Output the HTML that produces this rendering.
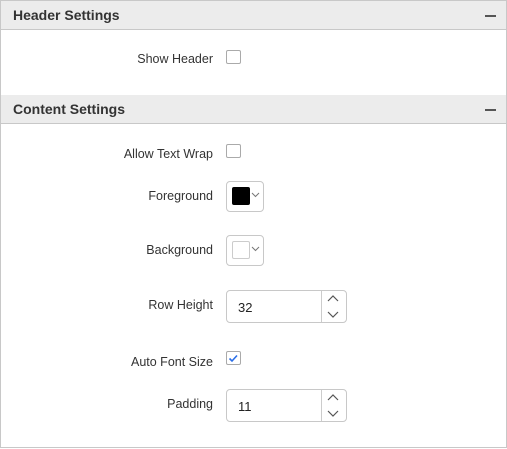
<!DOCTYPE html>
<html><head><style>
*{box-sizing:border-box;margin:0;padding:0}
body{width:507px;height:449px;background:#fff;font-family:"Liberation Sans",sans-serif;position:relative;overflow:hidden}
.frame{position:absolute;left:0;top:0;width:507px;height:448px;border:1px solid #c8c8c8}
.hdr{position:absolute;left:1px;width:505px;height:29px;background:#ececec;border-bottom:1px solid #c8c8c8;font-weight:bold;font-size:14px;color:#333;padding:6px 0 0 12px}
.hdr .m{position:absolute;right:10px;top:14px;width:11px;height:2px;background:#555}
.lbl{position:absolute;right:294px;font-size:12.5px;color:#333;text-align:right;white-space:nowrap}
.cb{position:absolute;left:226px;width:15px;height:14px;border:1px solid #aaa;border-radius:2px;background:#fff}
.cp{position:absolute;left:226px;width:38px;height:31px;border:1px solid #c8c8c8;border-radius:4px}
.cp .sw{position:absolute;left:5px;top:5px;width:18px;height:18px;border:1px solid #aaa;border-radius:2px}
.cp svg{position:absolute;left:24px;top:10px}
.num{position:absolute;left:226px;width:121px;height:33px;border:1px solid #c8c8c8;border-radius:4px;font-size:13px;color:#222;padding:9px 0 0 11px}
.num .d{position:absolute;left:94px;top:0;width:1px;height:31px;background:#ccc}
.num svg{position:absolute;left:100px}
</style></head><body>
<div class="frame"></div>
<div class="hdr" style="top:1px">Header Settings<div class="m"></div></div>
<div class="lbl" style="top:52px">Show Header</div>
<div class="cb" style="top:50px"></div>
<div class="hdr" style="top:95px">Content Settings<div class="m"></div></div>
<div class="lbl" style="top:147px">Allow Text Wrap</div>
<div class="cb" style="top:144px"></div>
<div class="lbl" style="top:189px">Foreground</div>
<div class="cp" style="top:181px"><div class="sw" style="background:#000;border-color:#000"></div><svg width="9" height="6"><path d="M1 1l3.5 3.5L8 1" fill="none" stroke="#777" stroke-width="1"/></svg></div>
<div class="lbl" style="top:243px">Background</div>
<div class="cp" style="top:235px"><div class="sw" style="background:#fff;border-color:#ccc"></div><svg width="9" height="6"><path d="M1 1l3.5 3.5L8 1" fill="none" stroke="#777" stroke-width="1"/></svg></div>
<div class="lbl" style="top:298px">Row Height</div>
<div class="num" style="top:290px">32<div class="d"></div><svg width="12" height="31" style="top:0"><path d="M1 10l5-5 5 5M1 21l5 5 5-5" fill="none" stroke="#555" stroke-width="1.2"/></svg></div>
<div class="lbl" style="top:355px">Auto Font Size</div>
<div class="cb" style="top:351px"><svg width="13" height="12" style="position:absolute;left:0;top:0"><path d="M2.5 6.5l2.5 2.5 5-5.5" fill="none" stroke="#2a6ee8" stroke-width="1.6"/></svg></div>
<div class="lbl" style="top:397px">Padding</div>
<div class="num" style="top:389px">11<div class="d"></div><svg width="12" height="31" style="top:0"><path d="M1 10l5-5 5 5M1 21l5 5 5-5" fill="none" stroke="#555" stroke-width="1.2"/></svg></div>
</body></html>
